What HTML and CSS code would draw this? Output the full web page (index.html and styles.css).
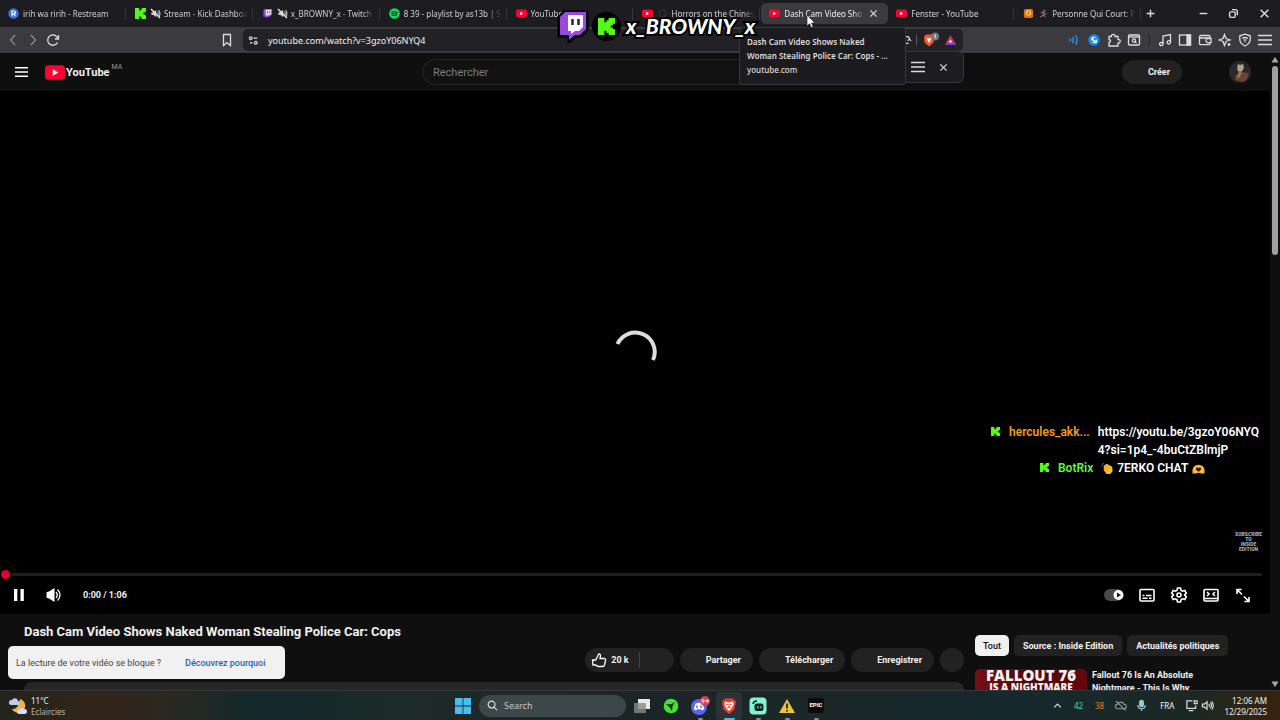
FILE: index.html
```html
<!DOCTYPE html>
<html lang="fr">
<head>
  <meta charset="UTF-8" />
  <title>Dash Cam Video Shows Naked Woman Stealing Police Car: Cops - YouTube</title>
  <link rel="stylesheet" href="styles.css">
</head>
<body>
  <!-- shared icons -->
  <svg class="sprite" aria-hidden="true">
    <symbol id="yt" viewBox="0 0 22 16"><rect width="22" height="16" rx="4" fill="#f03"/><path d="M8.500 4.500v7l6-3.500z" fill="#fff"/></symbol>
    <symbol id="kick" viewBox="0 0 12 12"><path d="M0 0h4.500v3H6V1.500h1.500V0H12v4h-1.500v1.300H9v1.400h1.500V8H12v4H7.500v-1.500H6V9H4.500v3H0z"/></symbol>
    <symbol id="muted" viewBox="0 0 16 16"><path d="M2 6h3l4-3.500v11L5 10H2z" fill="#ccc"/><path d="M11 5.500q2 2.500 0 5M12.500 3q4 5 0 10" fill="none" stroke="#ccc" stroke-width="1.500"/><path d="M1.500 1.500l13 13" stroke="#eee" stroke-width="1.800"/></symbol>
    <symbol id="close" viewBox="0 0 10 10"><path d="M1.500 1.500l7 7m0-7l-7 7"/></symbol>
    <symbol id="menu" viewBox="0 0 14 12"><path d="M0 1.500h14M0 6h14M0 10.500h14"/></symbol>
  </svg>

  <nav class="tabs">
    <a class="tab" href="#"><svg class="fav" viewBox="0 0 12 12"><circle cx="6" cy="6" r="5.700" fill="#3b6be0"/><path d="M4.300 9V3.300h2.200a1.500 1.500 0 0 1 0 3.200H4.300m2.200 0L8 9" fill="none" stroke="#fff" stroke-width="1.300"/></svg><span class="tab-title">irih wa ririh - Restream</span></a>
    <a class="tab" href="#"><svg class="fav kick"><use href="#kick"/></svg><svg class="mute"><use href="#muted"/></svg><span class="tab-title">Stream - Kick Dashboa</span></a>
    <a class="tab" href="#"><svg class="fav" viewBox="0 0 12 12"><path d="M2.500 1H11v6L8.500 9.500h-2L4.500 11.500v-2H1.500V3z" fill="#8d45f0"/><path d="M4 2h6v4.500L8.500 8h-2L5 9.300V8H4z" fill="#e9dcff"/><path d="M6 3.500v2.500M8.300 3.500v2.500" stroke="#8d45f0"/></svg><svg class="mute"><use href="#muted"/></svg><span class="tab-title">x_BROWNY_x - Twitch</span></a>
    <a class="tab" href="#"><svg class="fav" viewBox="0 0 12 12"><circle cx="6" cy="6" r="5.800" fill="#1ed760"/><path d="M2.700 4.300q3.500-1 6.700.7M3 6.200q3-.8 5.700.6M3.300 8q2.500-.6 4.700.5" fill="none" stroke="#111" stroke-linecap="round"/></svg><span class="tab-title">8 39 - playlist by as13b | S</span></a>
    <a class="tab" href="#"><svg class="fav"><use href="#yt"/></svg><span class="tab-title">YouTube</span></a>
    <a class="tab" href="#"><svg class="fav"><use href="#yt"/></svg><svg class="mute" viewBox="0 0 16 16"><circle cx="8" cy="8" r="5" fill="none" stroke="#444"/></svg><span class="tab-title">Horrors on the Chines</span></a>
    <a class="tab active" href="#"><svg class="fav"><use href="#yt"/></svg><span class="tab-title">Dash Cam Video Sho</span><svg class="tab-close line"><use href="#close"/></svg></a>
    <a class="tab" href="#"><svg class="fav"><use href="#yt"/></svg><span class="tab-title">Fenster - YouTube</span></a>
    <a class="tab" href="#"><svg class="fav" viewBox="0 0 12 12"><rect x="1" y="1" width="10" height="10" rx="2" fill="#d8731c"/><circle cx="6" cy="5.500" r="3" fill="#ffc04d"/><path d="M6 4v3" stroke="#a33d00"/></svg><svg class="mute" viewBox="0 0 16 16"><circle cx="9" cy="4" r="1.800" fill="#a0522d"/><path d="M4 7l4-1 2 3 3-1M8 7l-1 4-4 2M8 10l3 3" fill="none" stroke="#93715c" stroke-width="1.600"/></svg><span class="tab-title">Personne Qui Court: P</span></a>
    <div class="window-buttons">
      <button aria-label="Nouvel onglet"><svg class="line" viewBox="0 0 10 10"><path d="M5 1.500v7M1.500 5h7"/></svg></button>
      <button class="minimize" aria-label="Réduire"><svg class="line" viewBox="0 0 10 10"><path d="M1.500 5h7"/></svg></button>
      <button aria-label="Restaurer"><svg class="line" viewBox="0 0 10 10"><rect x="1.500" y="3.500" width="5" height="5" rx="1"/><path d="M3.500 1.500h3a2 2 0 0 1 2 2v3"/></svg></button>
      <button aria-label="Fermer"><svg class="line"><use href="#close"/></svg></button>
    </div>
  </nav>

  <div class="toolbar">
    <div class="nav-buttons">
      <button class="off" aria-label="Retour"><svg class="line" viewBox="0 0 14 14"><path d="M9 2L4.500 7 9 12"/></svg></button>
      <button class="off" aria-label="Avancer"><svg class="line" viewBox="0 0 14 14"><path d="M5 2l4.500 5L5 12"/></svg></button>
      <button aria-label="Recharger"><svg class="line" viewBox="0 0 14 14"><path d="M11.500 9.500A5.200 5.200 0 1 1 12 6M12.500 2v4H9"/></svg></button>
      <button class="bookmark" aria-label="Favori"><svg class="line" viewBox="0 0 14 14"><path d="M3.500 1.500h7v11L7 9.500l-3.500 3z"/></svg></button>
    </div>
    <div class="url-box">
      <svg class="line site" viewBox="0 0 12 12"><circle cx="3" cy="3.500" r="1.500"/><path d="M6 3.500h4M2 8.500h3"/><circle cx="8.500" cy="8.500" r="1.500"/></svg>
      <input type="text" aria-label="Adresse" value="youtube.com/watch?v=3gzoY06NYQ4">
      <svg class="line share" viewBox="0 0 14 14"><path d="M5 3h3q3 0 3 2.500M9 8l2-2 2 2M4 11h6"/></svg>
      <span class="bar"></span>
      <svg class="lion" viewBox="0 0 18 16"><path d="M4 2.500h6l2 2-.5 6L7 14.500 2.500 10.500 2 4.500z" fill="#f4562a"/><path d="M4.500 5.500L7 6.500l2.500-1-1 3L7 11 5.500 8.500z" fill="#fff"/><circle cx="13" cy="4.500" r="4" fill="#77777c"/><path d="M12.300 3.300l1-.5v3.500" fill="none" stroke="#fff" stroke-width=".8"/></svg>
      <svg class="bat" viewBox="0 0 14 12"><path d="M7 1L1 11h12z" fill="#e23a3a"/><path d="M1 11h12l-3-2.500H4z" fill="#6b42d8"/><path d="M7 1l6 10-3-2.500L7 5z" fill="#b02894"/><path d="M7 5.500L5 8.800h4z" fill="#eee"/></svg>
    </div>
    <div class="extensions">
      <button aria-label="Audio"><svg viewBox="0 0 14 14" class="line blue"><path d="M3 5.500q1 1.500 0 3M5.500 4q2 3 0 6M8.500 2.500q3 4.500 0 9"/></svg></button>
      <button aria-label="Shazam"><svg viewBox="0 0 14 14"><circle cx="7" cy="7" r="5.700" fill="#148df0"/><path d="M8.500 4Q5 5 5.500 6.500L8 8q0 1.500-2.500 1.500M5 7.500Q3.500 5 6.500 4M9 6.500Q10.500 9 8 10" fill="none" stroke="#fff" stroke-width="1.200"/></svg></button>
      <button aria-label="Extensions"><svg viewBox="0 0 14 14" class="line"><path d="M2 3.500h2.500a1.800 1.800 0 1 1 3.500 0h3v3a1.800 1.800 0 1 1 0 3.500v3H2V9.500a1.500 1.500 0 0 0 0-3z"/></svg></button>
      <button aria-label="Recherche d'onglets"><svg viewBox="0 0 14 14" class="line"><rect x="1.500" y="2" width="11" height="10" rx="1"/><path d="M1.500 4h11"/><circle cx="7" cy="7.500" r="1.600"/><path d="M8 8.800l1.500 1.200"/></svg></button>
      <span class="bar"></span>
      <button aria-label="Musique"><svg viewBox="0 0 14 14" class="line"><path d="M5 11V3l7.500-1.500V9"/><circle cx="3.300" cy="11" r="1.700"/><circle cx="10.800" cy="9.300" r="1.700"/></svg></button>
      <button aria-label="Panneau"><svg viewBox="0 0 14 14" class="line"><rect x="1.500" y="2" width="11" height="10"/><path d="M9 2h3.500v10H9z" fill="#ddd"/></svg></button>
      <button aria-label="Portefeuille"><svg viewBox="0 0 14 14" class="line"><path d="M12 5V3.500q0-1-1-1H3q-1.500 0-1.500 1.500v6.500q0 1.200 1.200 1.200h8.300q1 0 1-1V10M1.500 5H12M13 5.500H9.500a2.200 2.200 0 0 0 0 4.200H13z"/></svg></button>
      <button aria-label="Leo"><svg viewBox="0 0 14 14" class="line"><path d="M6.500 1.500L8 5.500l4 1.500-4 1.500-1.500 4L5 8.500 1 7l4-1.500zM11 10v3M9.500 11.500h3"/></svg></button>
      <button aria-label="VPN"><svg viewBox="0 0 14 14" class="line"><path d="M7 1.200l5.200 1.600v4Q12 10.500 7 13 2 10.500 1.800 6.800v-4z"/><path d="M4.300 5.500q2.700-2 5.400 0M5.500 7.300q1.500-1 3 0M7 8.500v1"/></svg></button>
      <button aria-label="Menu"><svg class="line"><use href="#menu"/></svg></button>
    </div>
  </div>

  <main class="page">
    <header class="yt-header">
      <button class="guide" aria-label="Guide"><svg class="line"><use href="#menu"/></svg></button>
      <a class="logo" href="#"><svg><use href="#yt"/></svg><b>YouTube</b><sup>MA</sup></a>
      <input class="search" type="text" placeholder="Rechercher" aria-label="Rechercher">
      <div class="header-right">
        <button class="pill">Créer</button>
        <svg class="avatar" viewBox="0 0 22 22"><circle cx="11" cy="11" r="11" fill="#2b2927"/><path d="M6 19q-1-6 5-7 5-2 9 1-1 5-6 8z" fill="#6b4433"/><path d="M9 3l2 1 3-1q2 4-1 7l-3 1Q7 8 9 3z" fill="#aaa38c"/><path d="M10 10l3 0-2 6-3 1z" fill="#927b54"/></svg>
      </div>
    </header>

    <section class="player">
      <div class="stage">
        <svg class="spinner" viewBox="0 0 44 44"><path d="M4.500 14A19 19 0 0 1 40 30"/></svg>
        <p class="watermark">SUBSCRIBE<br>TO<br>INSIDE<br>EDITION</p>
      </div>
      <div class="progress"><i></i></div>
      <div class="controls">
        <button aria-label="Pause"><svg viewBox="0 0 18 18"><path d="M4 3h3.300v12H4zM10.500 3h3.300v12h-3.300z" fill="#fff"/></svg></button>
        <button class="volume" aria-label="Volume"><svg viewBox="0 0 18 18"><path d="M1.500 6.500Q1.500 6 4 5.500L9.500 2v14L4 12.500Q1.500 12 1.500 11.500z" fill="#fff"/><path d="M11 6q2.500 3 0 6M12.500 3.500q5 5.500 0 11" fill="none" stroke="#fff" stroke-width="1.300"/></svg></button>
        <span class="time">0:00 / 1:06</span>
        <div class="controls-right">
          <button aria-label="Lecture automatique"><svg class="wide" viewBox="0 0 20 18"><rect y="3" width="19" height="12" rx="6" fill="#4a4a4a"/><circle cx="14.500" cy="9" r="5" fill="#fff"/><path d="M13 6.500v5l4-2.500z" fill="#111"/></svg></button>
          <button aria-label="Sous-titres"><svg class="line" viewBox="0 0 18 18"><rect x="2" y="3.500" width="14" height="11.500" rx="1"/><path d="M4.500 9.500h2M8 9.500h5.500M4.500 12.300h5M11 12.300h2.500"/></svg></button>
          <button aria-label="Paramètres"><svg class="line" viewBox="0 0 18 18"><path d="M7.500 2h3l.5 2.300 1.500.9 2.300-.7 1.500 2.600L14.600 9l1.700 1.900-1.500 2.600-2.300-.7-1.500.9-.5 2.300h-3L7 13.700l-1.500-.9-2.300.7-1.500-2.600L3.400 9 1.700 7.100l1.500-2.600 2.300.7L7 4.300z"/><circle cx="9" cy="9" r="2"/></svg></button>
          <button aria-label="Mode cinéma"><svg class="line" viewBox="0 0 18 18"><rect x="2" y="3.500" width="14" height="11.500" rx="1"/><path d="M2 12.500h14M5 6l2 2-2 2M13 6l-2 2 2 2"/></svg></button>
          <button aria-label="Plein écran"><svg class="line" viewBox="0 0 18 18"><path d="M3 8V3.500h4.500M3.500 4L8 8.500M10 10.500l4.500 4.500M15 11v4.500h-4.500"/></svg></button>
        </div>
      </div>
    </section>

    <div class="below">
      <section class="primary">
        <h1>Dash Cam Video Shows Naked Woman Stealing Police Car: Cops</h1>
        <div class="meta">
          <span class="channel"></span>
          <button class="pill like"><svg class="line" viewBox="0 0 16 16"><path d="M1.500 8h3.200l3-6q2-.3 1.800 2L9 6.500h4.500q1.500.5 1 2l-1 4.500q-.5 1.500-2 1.500H7L4.700 13H2z"/></svg>20 k<span></span></button>
          <button class="pill">Partager</button>
          <button class="pill">Télécharger</button>
          <button class="pill">Enregistrer</button>
          <button class="pill round" aria-label="Plus"></button>
        </div>
        <div class="description"></div>
      </section>
      <aside class="secondary">
        <div class="chips">
          <button class="chip selected">Tout</button>
          <button class="chip">Source : Inside Edition</button>
          <button class="chip">Actualités politiques</button>
        </div>
        <a class="suggestion" href="#">
          <div class="thumb">FALLOUT 76<small>IS A NIGHTMARE</small></div>
          <h3>Fallout 76 Is An Absolute Nightmare - This Is Why</h3>
        </a>
      </aside>
    </div>

    <div class="scrollbar">
      <svg viewBox="0 0 8 6"><path d="M4 0l3.500 5.500h-7z"/></svg>
      <div class="thumb-bar"></div>
      <svg viewBox="0 0 8 6"><path d="M4 6L.5.500h7z"/></svg>
    </div>

    <div class="toast">La lecture de votre vidéo se bloque ? <a href="#">Découvrez pourquoi</a></div>

    <!-- stream chat -->
    <div class="chat">
      <div class="chat-line">
        <svg class="kick"><use href="#kick"/></svg>
        <span class="user orange">hercules_akk...</span>
        <span class="message">https://youtu.be/3gzoY06NYQ4?si=1p4_-4buCtZBlmjP</span>
      </div>
      <div class="chat-line bot">
        <svg class="kick"><use href="#kick"/></svg>
        <span class="user green">BotRix</span>
        <svg class="emoji" viewBox="0 0 14 14"><path d="M3 4l2-1 1-1 6 3 .5 5L10 13H6L3 9z" fill="#fcbf2e"/><path d="M3.500 4.500l4 3.500M5 3l4 3.500M3 7l4 3" stroke="#d98a15" stroke-width=".8"/><path d="M1 5Q1 2 3.500 1" fill="none" stroke="#5865c8"/></svg>
        <span>7ERKO CHAT</span>
        <svg class="emoji" viewBox="0 0 14 14"><path d="M.5 12.500V9Q1 4.500 4.500 3.500L7 3l2.500.5Q13 4.500 13.500 9v3.500H10L7 11.500l-3 1z" fill="#fcb92e"/><path d="M7 10.500L4.300 8Q4 5.500 6 6l1 1 1-1q2-.5 1.700 2z" fill="#15100a"/></svg>
      </div>
    </div>
  </main>

  <footer class="taskbar">
    <div class="weather">
      <svg viewBox="0 0 18 18"><path d="M11 2a7 7 0 1 1-8 10q6 1 8-10z" fill="#f5b042"/><path d="M2 8a2.500 2.500 0 0 1 1-5 3.200 3.200 0 0 1 6 1 2 2 0 0 1 0 4z" fill="#b9cdf5"/><path d="M10 17a2 2 0 0 1 0-4 3 3 0 0 1 5-1 2.500 2.500 0 0 1 1 5z" fill="#cfdcfa"/></svg>
      <p>11°C<br><span>Eclaircies</span></p>
    </div>
    <div class="apps">
      <button class="start" aria-label="Démarrer"><svg viewBox="0 0 18 18"><path d="M1 1h7.600v7.600H1zM9.400 1H17v7.600H9.400zM1 9.400h7.600V17H1zM9.400 9.400H17V17H9.400z" fill="#47bdf3"/></svg></button>
      <label class="task-search"><svg class="line" viewBox="0 0 12 12"><circle cx="5" cy="5" r="3.700"/><path d="M8 8l3 3"/></svg><input type="text" placeholder="Search"></label>
      <button aria-label="Vue des tâches"><svg viewBox="0 0 18 18"><rect x="5" y="2" width="12" height="10" fill="#e8eaeb"/><rect x="1" y="6" width="12" height="10" fill="#888" fill-opacity=".8"/></svg></button>
      <button aria-label="Razer"><svg viewBox="0 0 18 18"><circle cx="9" cy="9" r="7.300" fill="#44e332"/><path d="M4 7l4.500.5L13 5l-2.500 4L10 14l-2.500-4z" fill="#10200f"/></svg></button>
      <button class="run" aria-label="Discord"><svg class="discord" viewBox="0 0 20 20"><circle cx="9" cy="11" r="8" fill="#5865f2"/><path d="M5.500 7.500q3.500-1.500 7 0l1.800 5.500-2.300 1.500-1-1.200H7l-1 1.200L3.700 13z" fill="#fff"/><path d="M7 9.500v2.500M11 9.500v2.500" stroke="#5865f2" stroke-width="1.500"/><circle cx="15" cy="5" r="5" fill="#d5414d"/><path d="M14 4.500a1.200 1.200 0 1 0-1.200 1.200q1.200 0 1.200-1.200 0 2.500-1.500 2.700M15.500 5H19M17.200 3.300v3.500" fill="none" stroke="#fff" stroke-width=".9"/></svg></button>
      <button class="run current" aria-label="Brave"><svg viewBox="0 0 18 18"><path d="M5 1.500h8l3 3-1.500 8L9 17l-5.500-4.500L2 4.500z" fill="#f03d28"/><path d="M5 4.500l4 1 4-1 .5 3-2 4L9 14l-2.500-2.500-2-4z" fill="#fff"/><path d="M6 7l2 1M12 7l-2 1M9 7v3M7 11l2-1 2 1" fill="none" stroke="#f03d28"/></svg></button>
      <button class="run" aria-label="Streamlabs"><svg viewBox="0 0 18 18"><rect x=".5" y=".5" width="17" height="17" rx="4" fill="#80f5d2"/><path d="M4 7q.5-3 4-3" fill="none" stroke="#09221c" stroke-width="1.500"/><rect x="5.500" y="6.500" width="9" height="7.500" rx="2.500" fill="#09221c"/><path d="M9 9v2.500M12 9v2.500" stroke="#80f5d2"/></svg></button>
      <button class="run" aria-label="Afterburner"><svg viewBox="0 0 18 18"><path d="M9 2l8 14H1z" fill="#ebc33c"/><path d="M9 6.500v5M9 13v1.500" stroke="#29200a" stroke-width="1.800"/></svg></button>
      <button class="run epic" aria-label="Epic Games"><span>EPIC</span></button>
    </div>
    <div class="tray">
      <svg class="line" viewBox="0 0 14 14"><path d="M3.500 9L7 5.500 10.500 9"/></svg>
      <span class="cpu">42</span>
      <span class="gpu">38</span>
      <svg class="line grey" viewBox="0 0 14 14"><path d="M4 10.500a2.500 2.500 0 0 1 0-5 3.500 3.500 0 0 1 6.500 0 2.500 2.500 0 0 1 .5 5zM2 2l10.500 10.500"/></svg>
      <svg class="line mic" viewBox="0 0 14 14"><rect x="5" y="1.500" width="4" height="7" rx="2" fill="#9cc6d8"/><path d="M3 6.500q0 4 4 4t4-4M7 10.500V13"/></svg>
      <span class="lang">FRA</span>
      <svg class="line net" viewBox="0 0 14 14"><path d="M8 2H2v8h9.500V7M4 12.500h5M10 2h3v3h-3z"/></svg>
      <svg class="line sound" viewBox="0 0 14 14"><path d="M1.500 5.500h2L6.500 3v8l-3-2.500h-2zM8.500 5.500q1 1.500 0 3M10 4q2.500 3 0 6M11.500 2.500q3.500 4.500 0 9"/></svg>
      <time>12:06 AM<br>12/29/2025</time>
    </div>
  </footer>

  <div class="find-bar">
    <button aria-label="Options"><svg class="line"><use href="#menu"/></svg></button>
    <button aria-label="Fermer la recherche"><svg class="line x"><use href="#close"/></svg></button>
  </div>

  <div class="tooltip">
    <p>Dash Cam Video Shows Naked Woman Stealing Police Car: Cops - ...</p>
    <span>youtube.com</span>
  </div>

  <div class="streamer">
    <svg viewBox="0 0 32 34"><path d="M7 3h23v18l-6 6h-5l-7 6v-6H2V8z" fill="#000" stroke="#000" stroke-width="3" stroke-linejoin="round"/><path d="M8 3h21v17l-6 6h-5l-6 5v-5H3V8z" fill="#9b48e0"/><path d="M11 6h15v12l-4 4h-4l-4 3v-3h-3z" fill="#fff"/><path d="M15.500 10v6M21.500 10v6" stroke="#35155c" stroke-width="2.500"/></svg>
    <span class="kick-badge"><svg class="kick"><use href="#kick"/></svg></span>
    <b>x_BROWNY_x</b>
  </div>

  <svg class="cursor" viewBox="0 0 10 14"><path d="M1 1v11l2.500-2.300L5.300 13.500l1.900-.9-1.700-3.600H9z" fill="#fff" stroke="#222" stroke-width=".7"/></svg>
</body>
</html>
```
FILE: styles.css
```css
* {
  box-sizing: border-box;
  margin: 0;
  padding: 0;
}
body {
  position: relative;
  display: flex;
  flex-direction: column;
  height: 100vh;
  overflow: hidden;
  background: #0f0f0f;
  color: #f1f1f1;
  font-family: Roboto, "Liberation Sans", sans-serif;
  font-size: 9px;
}
button, input {
  border: none;
  outline: none;
  background: none;
  color: inherit;
  font: inherit;
}
button {
  display: flex;
  align-items: center;
  justify-content: center;
}
a {
  color: inherit;
  text-decoration: none;
}
svg {
  display: block;
  flex: none;
}
.sprite {
  position: absolute;
  width: 0;
  height: 0;
}
.line {
  fill: none;
  stroke: #ddd;
  stroke-width: 1.3;
}
.kick {
  fill: #53fc18;
}
.bar {
  width: 1px;
  height: 10px;
  background: #5a5a60;
}

/* tab strip */
.tabs {
  display: flex;
  align-items: center;
  height: 27px;
  background: #1d1d21;
  color: #d0d0d4;
  font-family: "Noto Sans", sans-serif;
  font-size: 8px;
}
.tab {
  flex: 1;
  min-width: 0;
  height: 21px;
  display: flex;
  align-items: center;
  padding: 0 6px 0 8px;
  position: relative;
}
.tab:not(.active)::after {
  content: "";
  position: absolute;
  right: 1px;
  width: 1px;
  height: 12px;
  background: #34343a;
}
.tab.active {
  background: #3b3b3f;
  border-radius: 5px;
  color: #eee;
}
.fav {
  width: 11px;
  height: 11px;
  margin-right: 4px;
}
.mute {
  width: 11px;
  height: 11px;
  margin-right: 3px;
}
.tab-title {
  flex: 1;
  overflow: hidden;
  white-space: nowrap;
  mask-image: linear-gradient(90deg, #000 85%, transparent);
}
.tab-close {
  width: 9px;
  height: 9px;
  margin: 0 4px;
}
.window-buttons {
  flex: none;
  width: 138px;
  display: flex;
  justify-content: space-between;
  padding: 0 10px 0 3px;
}
.window-buttons svg {
  width: 11px;
  height: 11px;
}
.minimize {
  margin-left: 22px;
}

/* address bar */
.toolbar {
  display: grid;
  grid-template-columns: 243fr 720fr 317fr;
  align-items: center;
  height: 26px;
  background: #3b3b3f;
}
.nav-buttons {
  display: flex;
  gap: 6px;
  padding: 0 9px 0 6px;
}
.nav-buttons svg, .extensions svg {
  width: 14px;
  height: 14px;
}
.off {
  opacity: 0.5;
}
.bookmark {
  margin-left: auto;
}
.url-box {
  display: flex;
  align-items: center;
  height: 22px;
  padding: 0 6px 0 5px;
  border-radius: 5px;
  background: #222226;
  font-family: "Noto Sans", sans-serif;
}
.url-box input {
  flex: 1;
  margin-left: 9px;
}
.site {
  width: 11px;
  height: 11px;
}
.share {
  width: 12px;
  height: 12px;
  margin-right: 4px;
}
.lion {
  width: 18px;
  height: 16px;
  margin: 0 4px 0 5px;
}
.bat {
  width: 13px;
  height: 12px;
}
.extensions {
  display: flex;
  align-items: center;
  justify-content: flex-end;
  gap: 6px;
  padding-right: 8px;
}
.extensions .bar {
  margin: 0 2px;
  background: #222;
}
.extensions .blue {
  stroke: #2a9df4;
}

/* youtube header */
.page {
  position: relative;
  flex: 1;
  min-height: 0;
  padding-right: 10px;
  overflow: hidden;
}
.yt-header {
  display: grid;
  grid-template-columns: 1fr 426px 1fr;
  grid-template-areas: "left search right";
  align-items: center;
  height: 38px;
}
.guide, .logo {
  grid-area: left;
}
.guide {
  width: 12px;
  margin-left: 15px;
}
.guide svg {
  width: 13px;
  height: 12px;
  stroke: #fff;
  stroke-width: 1.6;
}
.logo {
  display: flex;
  align-items: center;
  width: 80px;
  margin-left: 45px;
}
.logo svg {
  width: 20px;
  height: 15px;
}
.logo b {
  margin-left: 1px;
  font-size: 11px;
}
.logo sup {
  align-self: flex-start;
  margin-left: 2px;
  color: #999;
  font-size: 7px;
  line-height: 5px;
}
.search {
  grid-area: search;
  height: 26px;
  padding: 0 10px;
  border: 1px solid #262626;
  border-radius: 13px;
  background: #121212;
  font-size: 11px;
}
.search::placeholder {
  color: #7c7c7c;
}
.header-right {
  grid-area: right;
  display: flex;
  align-items: center;
  justify-content: flex-end;
  gap: 47px;
  padding-right: 19px;
}
.pill {
  height: 24px;
  padding: 0 12px 0 26px;
  border-radius: 12px;
  background: #222;
  font-weight: 700;
}
.avatar {
  width: 22px;
  height: 22px;
}

/* player */
.player {
  display: flex;
  flex-direction: column;
  height: calc(100vh - 197px);
  background: #000;
}
.stage {
  position: relative;
  flex: 1;
  display: flex;
  align-items: center;
  justify-content: center;
}
.spinner {
  width: 44px;
  height: 44px;
  margin-top: 40px;
  fill: none;
  stroke: #ddd;
  stroke-width: 4;
}
.watermark {
  position: absolute;
  right: 8px;
  bottom: 21px;
  color: #aaa;
  font-size: 5px;
  font-weight: 900;
  line-height: 5px;
  text-align: center;
}
.progress {
  height: 3px;
  margin: 0 8px 0 6px;
  background: #1d1d1d;
}
.progress i {
  display: block;
  width: 9px;
  height: 9px;
  margin: -3px 0 0 -5px;
  border-radius: 50%;
  background: #e1002d;
}
.controls {
  display: flex;
  align-items: center;
  height: 38px;
  padding: 0 18px 0 10px;
}
.controls svg {
  width: 18px;
  height: 18px;
}
.controls .line {
  stroke: #fff;
  stroke-width: 1.6;
}
.controls .wide {
  width: 20px;
}
.volume {
  margin-left: 17px;
}
.time {
  margin-left: 20px;
  font-weight: 700;
}
.controls-right {
  display: flex;
  gap: 14px;
  margin-left: auto;
}

/* under the video */
.below {
  display: flex;
  gap: 11px;
  padding: 0 0 0 24px;
}
.primary {
  flex: 1;
  padding-top: 9px;
}
h1 {
  font-size: 13px;
  line-height: 18px;
}
.meta {
  display: flex;
  gap: 6px;
  margin-top: 7px;
}
.channel {
  width: 26px;
  height: 26px;
  margin: -1px auto 0 0;
  border-radius: 50%;
  background: #fff;
}
.like {
  padding: 0 17px 0 6px;
}
.like svg {
  width: 16px;
  height: 16px;
  margin-right: 4px;
  stroke: #fff;
}
.like span {
  width: 1px;
  height: 16px;
  margin: 0 17px 0 10px;
  background: #444;
}
.round {
  width: 24px;
  padding: 0;
}
.description {
  height: 60px;
  margin-top: 9px;
  border-radius: 8px;
  background: #272727;
}
.secondary {
  width: 295px;
  padding-top: 21px;
}
.chips {
  display: flex;
  gap: 5px;
}
.chip {
  height: 21px;
  padding: 0 9px;
  border-radius: 5px;
  background: #222;
  font-weight: 700;
}
.selected {
  padding: 0 8px;
  background: #f1f1f1;
  color: #0f0f0f;
  font-weight: 500;
}
.suggestion {
  display: flex;
  gap: 5px;
  margin-top: 13px;
}
.thumb {
  width: 112px;
  height: 63px;
  border-radius: 5px;
  background: linear-gradient(90deg, #751015, #4c0809 50%, #65070b);
  font-family: "Open Sans", sans-serif;
  font-size: 15px;
  font-weight: 800;
  line-height: 13px;
  text-align: center;
}
.thumb small {
  display: block;
  font-size: 10px;
  line-height: 10px;
}
.suggestion h3 {
  width: 120px;
  font-size: 9px;
  font-weight: 700;
  line-height: 13px;
}

/* page scrollbar */
.scrollbar {
  position: absolute;
  top: 4px;
  right: 0;
  bottom: 3px;
  width: 10px;
  display: flex;
  flex-direction: column;
  align-items: center;
  gap: 3px;
  fill: #aaa;
}
.scrollbar svg {
  width: 8px;
  height: 6px;
}
.thumb-bar {
  width: 6px;
  height: 30%;
  margin-bottom: auto;
  border-radius: 3px;
  background: #a0a0a0;
}

/* overlays */
.toast {
  position: absolute;
  left: 8px;
  bottom: 11px;
  display: flex;
  align-items: center;
  gap: 24px;
  height: 33px;
  padding: 0 19px 0 8px;
  border-radius: 5px;
  background: #f1f1f1;
  color: #444;
}
.toast a {
  color: #1f62c9;
  font-weight: 500;
}
.chat {
  position: absolute;
  right: 14px;
  bottom: 213px;
  width: 275px;
  color: #fff;
  font-size: 12px;
  font-weight: 600;
  line-height: 18px;
}
.chat-line {
  display: flex;
  align-items: flex-start;
}
.chat .kick {
  width: 9px;
  height: 9px;
  margin: 4px 9px 0 0;
}
.user {
  margin-right: 8px;
}
.message {
  flex: 1;
  word-break: break-all;
}
.bot {
  margin-left: 49px;
}
.emoji {
  width: 13px;
  height: 13px;
  margin: 3px 3px 0 0;
}
.bot span + .emoji:last-child {
  margin-left: 4px;
}
.orange {
  color: #f59a23;
}
.green {
  color: #5ff53a;
}

.find-bar {
  position: absolute;
  top: 51px;
  left: 739px;
  width: 225px;
  height: 32px;
  display: flex;
  align-items: center;
  justify-content: flex-end;
  gap: 14px;
  padding-right: 15px;
  border: 1px solid #38383c;
  border-radius: 6px;
  background: #1d1d21;
}
.find-bar svg {
  width: 14px;
  height: 12px;
}
.find-bar .x {
  width: 9px;
  height: 9px;
}
.tooltip {
  position: absolute;
  top: 27px;
  left: 739px;
  width: 167px;
  padding: 7px;
  border: 1px solid #38383c;
  border-radius: 3px;
  background: #1c1c20;
  color: #ddd;
  font-family: "Noto Sans", sans-serif;
  font-size: 8px;
  font-weight: 600;
  line-height: 14px;
}
.tooltip p {
  width: 146px;
}
.tooltip span {
  display: block;
  font-weight: 500;
}
.streamer {
  position: absolute;
  top: 9px;
  left: 557px;
  display: flex;
  align-items: center;
  gap: 3px;
  color: #fff;
}
.streamer > svg {
  width: 32px;
  height: 34px;
}
.kick-badge {
  width: 29px;
  height: 29px;
  margin-right: 2px;
  padding: 6px;
  border-radius: 50%;
  background: #000;
}
.kick-badge svg {
  width: 17px;
  height: 17px;
}
.streamer b {
  font-family: Lato, sans-serif;
  font-size: 21px;
  font-style: italic;
  font-weight: 900;
  line-height: 30px;
  -webkit-text-stroke: 4px #000;
  paint-order: stroke fill;
}
.cursor {
  position: absolute;
  top: 14px;
  left: 806px;
  width: 10px;
  height: 14px;
}

/* taskbar */
.taskbar {
  display: grid;
  grid-template-columns: 1fr auto 1fr;
  align-items: center;
  height: 30px;
  border-top: 1px solid #343838;
  background: linear-gradient(90deg, #24241d, #32241a 8%, #2a2820 13%, #14292b 20%, #1d2a28 32%, #1b2528 50%, #1b2728 66%, #15292e 78%, #1c2824 93%, #35230f);
  font-family: "Noto Sans", sans-serif;
  font-size: 8px;
}
.weather {
  display: flex;
  align-items: center;
  gap: 4px;
  padding-left: 9px;
  line-height: 11px;
}
.weather span {
  color: #b8b8b0;
}
.weather svg {
  width: 18px;
  height: 18px;
}
.apps {
  display: flex;
  align-items: center;
  gap: 3px;
  padding-right: 2px;
}
.apps button {
  position: relative;
  width: 26px;
  height: 28px;
}
.apps .start {
  width: 27px;
}
.apps svg {
  width: 18px;
  height: 18px;
}
.apps .discord {
  width: 20px;
  height: 20px;
}
.task-search {
  display: flex;
  align-items: center;
  gap: 6px;
  width: 147px;
  height: 22px;
  padding-left: 8px;
  border-radius: 11px;
  background: #3b4748;
  font-size: 9px;
}
.task-search svg {
  width: 11px;
  height: 11px;
}
.task-search input {
  width: 100px;
}
.task-search input::placeholder {
  color: #c0c8c8;
}
.run::after {
  content: "";
  position: absolute;
  bottom: 0;
  width: 5px;
  height: 2px;
  border-radius: 1px;
  background: #888e90;
}
.current {
  border-radius: 4px;
  background: #2b3336;
}
.current::after {
  width: 11px;
  background: #4cb8ee;
}
.epic span {
  padding: 2px 1px 4px;
  border-radius: 2px;
  background: #0c0c0c;
  font-family: Roboto, sans-serif;
  font-size: 6px;
  font-weight: 900;
  line-height: 9px;
}
.tray {
  display: flex;
  align-items: center;
  justify-content: flex-end;
  padding-right: 13px;
}
.tray svg {
  width: 13px;
  height: 13px;
}
.tray .grey {
  stroke: #8d9999;
  margin-right: 8px;
}
.tray .mic {
  stroke: #9cc6d8;
  margin-right: 12px;
}
.cpu {
  margin: 0 12px 0 10px;
  color: #2be8b4;
}
.gpu {
  margin-right: 10px;
  color: #e17e2d;
}
.lang {
  margin-right: 11px;
}
.tray .sound {
  margin: 0 10px 0 3px;
}
time {
  line-height: 11px;
  text-align: right;
}
```
